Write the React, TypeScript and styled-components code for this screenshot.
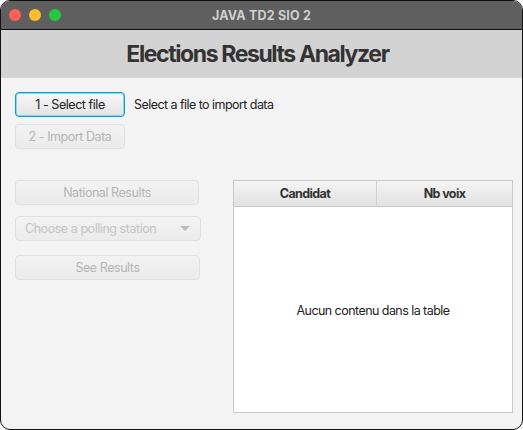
import * as React from 'react';
import styled, { createGlobalStyle } from 'styled-components';

const GlobalStyle = createGlobalStyle`
	html, body {
		margin: 0;
		padding: 0;
		background: #ffffff;
	}
	body {
		font-family: Inter, "Liberation Sans", sans-serif;
	}
`;

const Window = styled.div`
	box-sizing: border-box;
	width: 523px;
	height: 430px;
	border: 1px solid #111;
	border-radius: 10px;
	overflow: hidden;
	display: flex;
	flex-direction: column;
	background: #f3f3f3;
`;

const TitleBar = styled.div`
	position: relative;
	height: 28px;
	flex: none;
	background: #5f5f5f;
	border-bottom: 1px solid #111;
	display: flex;
	align-items: center;
	justify-content: center;
`;

const Lights = styled.div`
	position: absolute;
	left: 8px;
	top: 8px;
	display: flex;
	gap: 8px;
`;

const Light = styled.span<{ color: string }>`
	width: 12px;
	height: 12px;
	border-radius: 50%;
	background: ${props => props.color};
`;

const WindowTitle = styled.div`
	color: #d0d0d0;
	font-size: 12.5px;
	font-weight: 700;
	letter-spacing: 0.2px;
`;

const Header = styled.div`
	height: 48px;
	flex: none;
	background: #d3d3d3;
	display: flex;
	align-items: center;
	justify-content: center;
	padding-right: 8px;
`;

const HeaderTitle = styled.h1`
	margin: 0;
	font-size: 23px;
	font-weight: 700;
	color: #333;
	letter-spacing: -1.4px;
`;

const Content = styled.div`
	flex: 1;
	display: flex;
	flex-direction: column;
	padding: 14px 9px 16px 14px;
`;

const FileRow = styled.div`
	display: flex;
	align-items: center;
	gap: 9px;
	margin-bottom: 7px;
`;

const Label = styled.span`
	font-size: 12.5px;
	color: #222;
	letter-spacing: -0.55px;
`;

const Button = styled.button<{ focused?: boolean; width: number }>`
	box-sizing: border-box;
	width: ${props => props.width}px;
	height: 25px;
	padding: 0;
	border-radius: 4px;
	border: 1px solid ${props => props.focused ? '#0a9fd6' : '#c5c5c5'};
	box-shadow: ${props => props.focused ? 'inset 0 0 0 1px #8fd2ee' : 'none'};
	background: linear-gradient(#f7f7f7, #e3e3e3);
	font-family: inherit;
	font-size: 12.5px;
	letter-spacing: -0.45px;
	color: #222;

	&:disabled {
		color: #b4b4b4;
		border-color: #e0e0e0;
		background: linear-gradient(#f2f2f2, #ebebeb);
	}
`;

const Main = styled.div`
	flex: 1;
	display: flex;
	gap: 32px;
	margin-top: 31px;
`;

const Sidebar = styled.div`
	width: 186px;
	display: flex;
	flex-direction: column;
	gap: 11px;
`;

const Combo = styled.div`
	box-sizing: border-box;
	width: 186px;
	height: 25px;
	border: 1px solid #e0e0e0;
	border-radius: 4px;
	background: linear-gradient(#f2f2f2, #ebebeb);
	display: flex;
	align-items: center;
	justify-content: space-between;
	padding: 0 10px 0 9px;
	margin-bottom: 3px;
	font-size: 12.5px;
	letter-spacing: -0.45px;
	color: #c4c4c4;
`;

const Arrow = styled.span`
	width: 0;
	height: 0;
	border-left: 5px solid transparent;
	border-right: 5px solid transparent;
	border-top: 5px solid #bdbdbd;
`;

const Table = styled.div`
	flex: 1;
	display: flex;
	flex-direction: column;
	border: 1px solid #c8c8c8;
	background: #fff;
`;

const TableHead = styled.div`
	display: grid;
	grid-template-columns: 143px 1fr;
	height: 25px;
	border-bottom: 1px solid #c8c8c8;
	background: linear-gradient(#f4f4f4, #e2e2e2);
`;

const HeadCell = styled.div<{ last?: boolean }>`
	display: flex;
	align-items: center;
	justify-content: center;
	font-size: 12.5px;
	font-weight: 700;
	letter-spacing: -0.6px;
	color: #333;
	border-right: ${props => props.last ? 'none' : '1px solid #d0d0d0'};
`;

const Placeholder = styled.div`
	flex: 1;
	display: flex;
	align-items: center;
	justify-content: center;
	font-size: 12.5px;
	letter-spacing: -0.55px;
	color: #222;
	padding-top: 2px;
`;

export default function App() {
	return (
		<>
			<GlobalStyle />
			<Window>
				<TitleBar>
					<Lights>
						<Light color="#fe5f57" />
						<Light color="#febc2e" />
						<Light color="#28c840" />
					</Lights>
					<WindowTitle>JAVA TD2 SIO 2</WindowTitle>
				</TitleBar>
				<Header>
					<HeaderTitle>Elections Results Analyzer</HeaderTitle>
				</Header>
				<Content>
					<FileRow>
						<Button focused width={110}>1 - Select file</Button>
						<Label>Select a file to import data</Label>
					</FileRow>
					<Button disabled width={110}>2 - Import Data</Button>
					<Main>
						<Sidebar>
							<Button disabled width={184}>National Results</Button>
							<Combo>
								<span>Choose a polling station</span>
								<Arrow />
							</Combo>
							<Button disabled width={185}>See Results</Button>
						</Sidebar>
						<Table>
							<TableHead>
								<HeadCell>Candidat</HeadCell>
								<HeadCell last>Nb voix</HeadCell>
							</TableHead>
							<Placeholder>Aucun contenu dans la table</Placeholder>
						</Table>
					</Main>
				</Content>
			</Window>
		</>
	);
}
